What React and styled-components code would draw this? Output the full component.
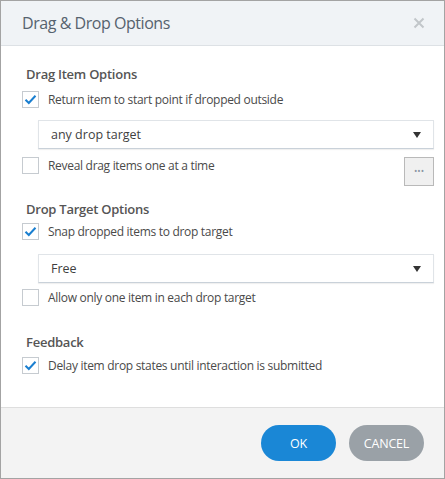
import React from "react";
import styled, { createGlobalStyle } from "styled-components";

const Global = createGlobalStyle`
  body {
    margin: 0;
    font-family: "Open Sans", "Noto Sans", sans-serif;
  }
`;

const Dialog = styled.div`
  width: 445px;
  height: 479px;
  box-sizing: border-box;
  border: 1px solid #a3a3a3;
  display: flex;
  flex-direction: column;
  background: #fff;
`;

const Header = styled.div`
  height: 44px;
  flex-shrink: 0;
  background: #f0f3f6;
  border-bottom: 1px solid #dde1e5;
  display: flex;
  align-items: center;
  justify-content: space-between;
  padding: 0 19px 0 21px;
`;

const Title = styled.h1`
  margin: 0;
  font-size: 16px;
  font-weight: 400;
  letter-spacing: -0.45px;
  color: #56626e;
`;

const Close = styled.button`
  border: 0;
  background: none;
  padding: 0;
  width: 12px;
  height: 12px;
  display: flex;
  cursor: pointer;
`;

const Body = styled.div`
  flex: 1;
  padding: 0 10px 0 21px;
`;

const Heading = styled.h2`
  margin: ${(p) => p.$top}px 0 0 4px;
  font-size: 13px;
  line-height: 18px;
  font-weight: 600;
  letter-spacing: -0.25px;
  color: #555;
`;

const Row = styled.div`
  display: flex;
  align-items: flex-start;
  justify-content: space-between;
  margin-top: ${(p) => p.$top}px;
`;

const Check = styled.label`
  display: flex;
  align-items: center;
  gap: 9px;
  font-size: 12px;
  letter-spacing: -0.3px;
  color: #4a4a4a;
  line-height: 17px;
  cursor: pointer;
`;

const Box = styled.span`
  width: 17px;
  height: 17px;
  box-sizing: border-box;
  border: 1px solid #c6cbd0;
  background: #fff;
  display: flex;
  align-items: center;
  justify-content: center;
`;

const Select = styled.div`
  margin: ${(p) => p.$top}px 0 0 16px;
  height: 29px;
  box-sizing: border-box;
  border: 1px solid #e0e4e8;
  border-bottom-color: #c9d1d9;
  box-shadow: 0 1px 1px rgba(0, 0, 0, 0.06);
  display: flex;
  align-items: center;
  justify-content: space-between;
  padding: 0 12px 0 12px;
  font-size: 12.5px;
  color: #3f3f3f;
`;

const Arrow = styled.span`
  width: 0;
  height: 0;
  border-left: 4.5px solid transparent;
  border-right: 4.5px solid transparent;
  border-top: 6px solid #333;
`;

const MoreButton = styled.button`
  width: 30px;
  height: 29px;
  box-sizing: border-box;
  border: 1px solid #b9b9b9;
  background: #f0f0f0;
  color: #8a95a3;
  font-size: 9px;
  line-height: 1;
  padding: 0 0 2px;
  font-family: inherit;
`;

const Footer = styled.div`
  height: 70px;
  flex-shrink: 0;
  background: #f3f3f3;
  border-top: 1px solid #dedede;
  display: flex;
  align-items: center;
  justify-content: flex-end;
  gap: 13px;
  padding-right: 20px;
`;

const Button = styled.button`
  width: 75px;
  height: 36px;
  border: 0;
  border-radius: 18px;
  background: ${(p) => (p.$primary ? "#1a87d6" : "#9aa1a7")};
  color: #fff;
  font-family: "Open Sans", "Noto Sans", sans-serif;
  font-size: 12.5px;
  letter-spacing: -0.2px;
  cursor: pointer;
`;

const Tick = () => (
  <svg width="13" height="11" viewBox="0 0 13 11">
    <path d="M1.5 5.8 L4.8 9 L11.5 1.8" fill="none" stroke="#1a7fd0" strokeWidth="2" />
  </svg>
);

function Checkbox({ checked, children }) {
  return (
    <Check>
      <Box>{checked && <Tick />}</Box>
      {children}
    </Check>
  );
}

export default function App() {
  return (
    <>
      <Global />
      <Dialog>
        <Header>
          <Title>Drag &amp; Drop Options</Title>
          <Close aria-label="close">
            <svg width="12" height="12" viewBox="0 0 12 12">
              <path d="M1.5 1.5 L10.5 10.5 M10.5 1.5 L1.5 10.5" stroke="#c2c6ca" strokeWidth="2" />
            </svg>
          </Close>
        </Header>
        <Body>
          <Heading $top={19}>Drag Item Options</Heading>
          <Row $top={8}>
            <Checkbox checked>Return item to start point if dropped outside</Checkbox>
          </Row>
          <Select $top={12}>
            any drop target
            <Arrow />
          </Select>
          <Row $top={8}>
            <Checkbox>Reveal drag items one at a time</Checkbox>
            <MoreButton>•••</MoreButton>
          </Row>

          <Heading $top={14}>Drop Target Options</Heading>
          <Row $top={5}>
            <Checkbox checked>Snap dropped items to drop target</Checkbox>
          </Row>
          <Select $top={14}>
            Free
            <Arrow />
          </Select>
          <Row $top={6}>
            <Checkbox>Allow only one item in each drop target</Checkbox>
          </Row>

          <Heading $top={27}>Feedback</Heading>
          <Row $top={6}>
            <Checkbox checked>Delay item drop states until interaction is submitted</Checkbox>
          </Row>
        </Body>
        <Footer>
          <Button $primary>OK</Button>
          <Button>CANCEL</Button>
        </Footer>
      </Dialog>
    </>
  );
}
